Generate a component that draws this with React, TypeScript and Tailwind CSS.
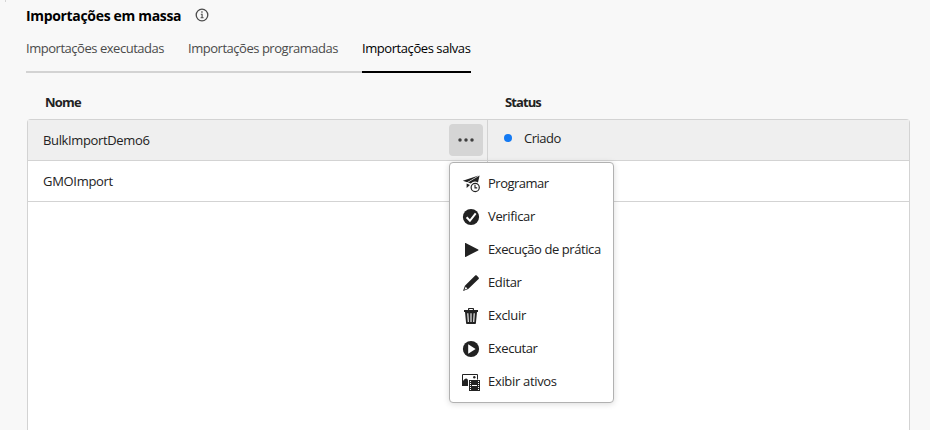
import type { ReactNode } from "react";

function Icon({ children }: { children: ReactNode }) {
  return (
    <svg width="18" height="18" viewBox="0 0 18 18" fill="#222" className="mt-px shrink-0">
      {children}
    </svg>
  );
}

const ScheduleIcon = () => (
  <Icon>
    <path d="M.8 5.8 16.6.5 5.2 7.2Z" />
    <path d="M17.6.6 16 7.4a5.8 5.8 0 0 0-7.2 1.2L6 7.6Z" />
    <path d="M4.6 8.4 8 9.9 4.6 13Z" />
    <circle cx="13.2" cy="12.5" r="4.1" fill="white" stroke="#222" strokeWidth="1.2" />
    <path d="M13 9.8v3.1h2.2" fill="none" stroke="#222" strokeWidth="1.1" />
  </Icon>
);

const CheckIcon = () => (
  <Icon>
    <circle cx="9" cy="9" r="8.1" />
    <path d="m4.6 9.3 3.3 3.5 5.8-7.4" fill="none" stroke="white" strokeWidth="2" />
  </Icon>
);

const PlayIcon = () => (
  <Icon>
    <path d="M3 2.4c0-.4.3-.5.6-.3L16.2 8.6c.4.2.4.6 0 .8L3.6 15.9c-.3.2-.6.1-.6-.3Z" />
  </Icon>
);

const EditIcon = () => (
  <Icon>
    <path d="M13.2 1.5c.5-.5 1-.5 1.5 0l1.9 1.9c.5.5.5 1 0 1.5L6.2 15.1 1 17.1l1.9-5.3ZM3.7 12.8l-1.3 3 3-1.3Z" fillRule="evenodd" />
  </Icon>
);

const TrashIcon = () => (
  <Icon>
    <path d="M6 3V1.7c0-.5.3-.8.8-.8h4.4c.5 0 .8.3.8.8V3h4v2H2V3Zm1.2 0h3.6V2H7.2Z" fillRule="evenodd" />
    <path d="M3 5h12l-1.1 11.3c0 .4-.3.7-.7.7H4.8c-.4 0-.7-.3-.7-.7Z" />
    <path d="m5.8 6.2.5 8.8M9 6.2V15M12.2 6.2l-.5 8.8" stroke="white" strokeWidth="1.1" />
  </Icon>
);

const RunIcon = () => (
  <Icon>
    <circle cx="9" cy="9" r="8.1" />
    <path d="M6.2 4.3 13.6 9l-7.4 4.7Z" fill="white" />
  </Icon>
);

const AssetsIcon = () => (
  <Icon>
    <path d="M.5 1.5h15v5M.5 1.5v11" fill="none" stroke="#222" />
    <path d="M0 8.8C1.5 7.5 3 5.6 4.2 5.6S6 7 6 8v5H0Z" />
    <circle cx="12.3" cy="4.3" r="1.2" />
    <path d="M7 7h11v11H7Z" />
    <path d="M10 12.5h5" stroke="white" />
    <path d="M8.5 8v9M16.5 8v9" stroke="white" strokeDasharray="1 1" />
  </Icon>
);

const items = [
  { label: "Programar", icon: <ScheduleIcon />, tracking: "tracking-[-0.5px]" },
  { label: "Verificar", icon: <CheckIcon />, tracking: "tracking-[-0.35px]" },
  { label: "Execução de prática", icon: <PlayIcon />, tracking: "tracking-[-0.42px]" },
  { label: "Editar", icon: <EditIcon />, tracking: "tracking-[-0.35px]" },
  { label: "Excluir", icon: <TrashIcon />, tracking: "tracking-[-0.3px]" },
  { label: "Executar", icon: <RunIcon />, tracking: "tracking-[-0.4px]" },
  { label: "Exibir ativos", icon: <AssetsIcon />, tracking: "tracking-[-0.32px]" },
];

function Menu() {
  return (
    <div className="absolute top-[42px] left-[421px] z-10 h-[241px] w-[165px] rounded-[4px] border border-[#b1b1b1] bg-white pt-[4px] shadow-[0_1px_6px_rgba(0,0,0,0.15)]">
      {items.map((item) => (
        <div key={item.label} className="flex h-[33px] items-center pl-[12px] whitespace-nowrap text-[#222]">
          {item.icon}
          <span className={`ml-[8px] pb-[2px] ${item.tracking}`}>{item.label}</span>
        </div>
      ))}
    </div>
  );
}

export default function App() {
  return (
    <div className="flex h-[430px] w-[930px] flex-col overflow-hidden bg-[#f8f8f8] font-['Open_Sans',sans-serif] text-[13px] leading-[18px] text-[#222]">
      <div className="ml-[5px] h-[2px] w-px shrink-0 bg-[#d5d5d5]" />
      <header className="flex h-[28px] items-center gap-[14px] pb-[2px] pl-[26px]">
        <h1 className="mt-[2px] w-[155px] text-[14px] font-bold tracking-[-0.33px] whitespace-nowrap text-black">Importações em massa</h1>
        <svg width="14" height="14" viewBox="0 0 14 14" fill="none" stroke="#4b4b4b" strokeWidth="1.3">
          <circle cx="7" cy="7" r="5.8" />
          <path d="M5.8 6.2h1.3v3.6M5.6 9.8h3" strokeWidth="1.1" />
          <path d="M6.3 4h1.3" strokeWidth="1.4" />
        </svg>
      </header>
      <nav className="ml-[26px] flex h-[43px] w-[445px] border-b-2 border-[#d3d3d3] pt-[9px] tracking-[-0.47px] whitespace-nowrap text-[#4b4b4b]">
        <div className="w-[162px]">Importações executadas</div>
        <div className="w-[174px]">Importações programadas</div>
        <div className="h-[34px] w-[109px] border-b-2 border-black tracking-[-0.43px] text-black">Importações salvas</div>
      </nav>
      <div className="flex h-[46px] items-end pb-[8px] pl-[45px] font-bold">
        <div className="w-[460px] tracking-[-0.8px]">Nome</div>
        <div className="tracking-[-0.9px]">Status</div>
      </div>
      <section className="relative ml-[27px] h-[311px] w-[883px] shrink-0 rounded-t-[4px] border border-b-0 border-[#d3d3d3] bg-white">
        <div className="flex h-[41px] border-b border-[#d3d3d3] bg-[#efefef]">
          <div className="flex w-[460px] items-center justify-between border-r border-[#d3d3d3] pr-[4px] pl-[15px]">
            <span className="tracking-[-0.36px]">BulkImportDemo6</span>
            <button className="flex h-[32px] w-[34px] items-center justify-center rounded-[4px] bg-[#d5d5d5]">
              <svg width="18" height="6" viewBox="0 0 18 6" fill="#3f3f3f">
                <circle cx="3" cy="3" r="1.75" />
                <circle cx="9" cy="3" r="1.75" />
                <circle cx="15" cy="3" r="1.75" />
              </svg>
            </button>
          </div>
          <div className="flex items-center gap-[12px] pb-[4px] pl-[16px]">
            <i className="size-[8px] rounded-full bg-[#147af3]" />
            <span className="tracking-[-0.5px]">Criado</span>
          </div>
        </div>
        <div className="flex h-[41px] border-b border-[#d3d3d3]">
          <div className="flex w-[460px] items-center border-r border-[#d3d3d3] pl-[15px] tracking-[-0.3px]">GMOImport</div>
        </div>
        <Menu />
      </section>
    </div>
  );
}
